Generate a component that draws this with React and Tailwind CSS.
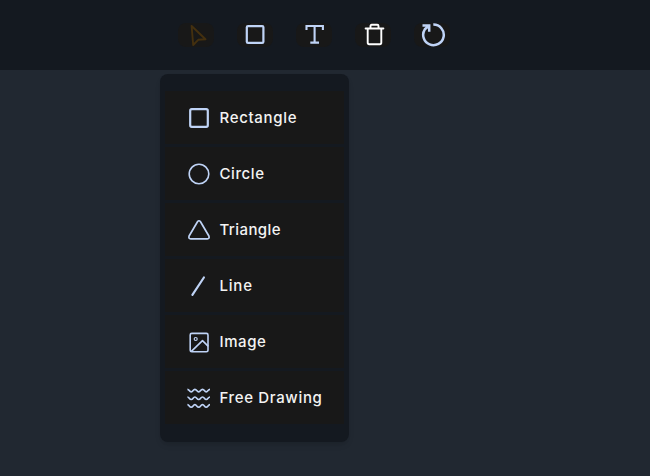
const blue = "#bfd3f6";

function Svg({ w, h, sw = 2, color = blue, children }) {
  return (
    <svg width={w} height={h} viewBox={`0 0 ${w} ${h}`} fill="none" stroke={color} strokeWidth={sw} strokeLinecap="round" strokeLinejoin="round" className="block shrink-0">
      {children}
    </svg>
  );
}

const tools = [
  { name: "Select", icon: <Svg w={36} h={24} sw={1.9} color="#44300f"><path d="M13.6 3 27.5 16.3 20.2 16.8 15.2 22Z" /></Svg> },
  { name: "Shapes", icon: <Svg w={36} h={24} sw={2.2}><rect x="9.8" y="3.1" width="16.6" height="16.8" rx="1.2" /></Svg> },
  { name: "Text", icon: <Svg w={36} h={24} sw={2.1}><path strokeLinecap="butt" strokeLinejoin="miter" d="M10.5 7V3H26.9V7M18.6 3V19.6M14.3 19.6H23" /></Svg> },
  { name: "Delete", icon: <Svg w={36} h={24} sw={1.9} color="#fff"><path d="M10.6 5.5H28.4M12.7 5.5V19.5Q12.7 21.2 14.2 21.2H24.8Q26.3 21.2 26.3 19.5V5.5M15.5 5V3Q15.5 1.8 16.7 1.8H22.3Q23.5 1.8 23.5 3V5" /></Svg> },
  { name: "Rotate", icon: <Svg w={36} h={24} sw={2.5}><path strokeLinecap="butt" strokeLinejoin="miter" d="M19.3 1.6A10.3 10.3 0 1 1 10.9 6.2L14.6 3M8.5 2.4H15.2V8.8" /></Svg> },
];

const shapes = [
  { name: "Rectangle", track: "tracking-[0.67px]", icon: <Svg w={24} h={24} sw={2.2}><rect x="3.2" y="3.2" width="17.6" height="17.6" rx="1.5" /></Svg> },
  { name: "Circle", track: "tracking-[0.58px]", icon: <Svg w={24} h={24} sw={1.6}><circle cx="12" cy="12" r="9.8" /></Svg> },
  { name: "Triangle", track: "tracking-[0.42px]", icon: <Svg w={24} h={24} sw={1.7}><path d="M10.5 3.8Q12 1.7 13.5 3.8L21.9 18Q22.8 20.7 20.3 20.8H3.7Q1.2 20.7 2.1 18Z" /></Svg> },
  { name: "Line", track: "tracking-[0.8px]", icon: <Svg w={24} h={24} sw={2.2}><path d="M5.4 20.8 16.9 3.5" /></Svg> },
  { name: "Image", track: "tracking-[0.6px]", icon: <Svg w={24} h={24} sw={1.6}><rect x="3.2" y="3.4" width="17.8" height="18.4" rx="1.6" /><circle cx="8.7" cy="9" r="1.5" strokeWidth="1.2" /><path d="M4.6 21.2 15.5 10.7 20.8 15.8" /></Svg> },
  { name: "Free Drawing", track: "tracking-[0.65px]", icon: <Svg w={24} h={24} sw={1.7}>{[3.3, 11, 18.7].map((y) => <path key={y} strokeLinecap="butt" d={`M.4 ${y}C2.3 ${y} 2.3 ${y + 2.5} 4.2 ${y + 2.5}S6.1 ${y} 7.9 ${y}S9.8 ${y + 2.5} 11.7 ${y + 2.5}S13.6 ${y} 15.5 ${y}S17.4 ${y + 2.5} 19.2 ${y + 2.5}S21.1 ${y} 23 ${y}`} />)}</Svg> },
];

export default function App() {
  return (
    <div className="h-[476px] w-[650px] overflow-hidden bg-[#212831] font-['Inter',sans-serif]">
      <header className="flex h-[70px] gap-[23px] bg-[#141920] pt-[23px] pl-[178px]">
        {tools.map((t) => (
          <button key={t.name} aria-label={t.name} className="h-6 w-9 rounded-lg bg-[#181818]">{t.icon}</button>
        ))}
      </header>
      <div className="mt-1 ml-[160px] flex h-[368px] w-[189px] flex-col gap-[3px] rounded-lg bg-[#141920] px-[5px] pt-[17px] shadow-md">
        {shapes.map((s) => (
          <button key={s.name} className="flex h-[53px] shrink-0 items-center gap-[9px] bg-[#181818] pl-[21.5px] text-[#f3f3f3]">
            {s.icon}
            <span className={`text-[15px] leading-6 font-medium whitespace-nowrap ${s.track}`}>{s.name}</span>
          </button>
        ))}
      </div>
    </div>
  );
}
